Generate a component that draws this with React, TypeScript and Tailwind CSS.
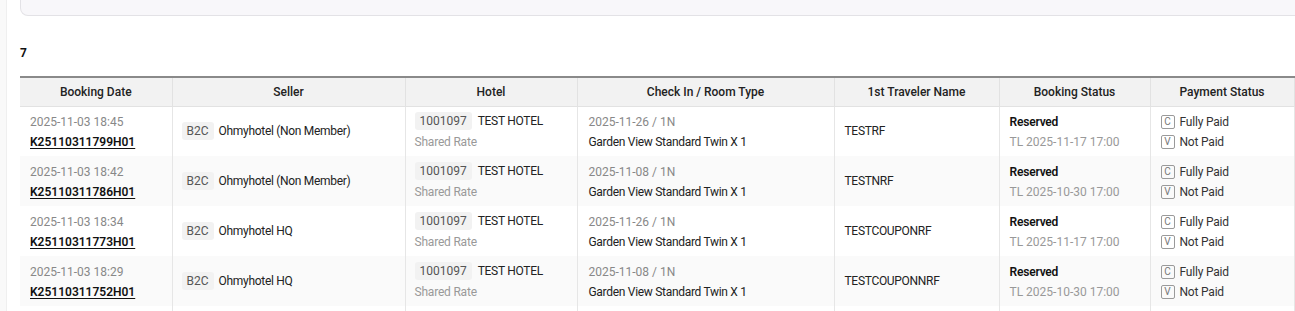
import React from "react";

type Row = {
  date: string;
  no: string;
  seller: string;
  checkIn: string;
  tl: string;
  traveler: string;
};

const rows: Row[] = [
  { date: "2025-11-03 18:45", no: "K25110311799H01", seller: "Ohmyhotel (Non Member)", checkIn: "2025-11-26 / 1N", tl: "TL 2025-11-17 17:00", traveler: "TESTRF" },
  { date: "2025-11-03 18:42", no: "K25110311786H01", seller: "Ohmyhotel (Non Member)", checkIn: "2025-11-08 / 1N", tl: "TL 2025-10-30 17:00", traveler: "TESTNRF" },
  { date: "2025-11-03 18:34", no: "K25110311773H01", seller: "Ohmyhotel HQ", checkIn: "2025-11-26 / 1N", tl: "TL 2025-11-17 17:00", traveler: "TESTCOUPONRF" },
  { date: "2025-11-03 18:29", no: "K25110311752H01", seller: "Ohmyhotel HQ", checkIn: "2025-11-08 / 1N", tl: "TL 2025-10-30 17:00", traveler: "TESTCOUPONNRF" },
];

const headers = [
  { label: "Booking Date", w: "w-[152px]" },
  { label: "Seller", w: "w-[233px]" },
  { label: "Hotel", w: "w-[172px]" },
  { label: "Check In / Room Type", w: "w-[257px]" },
  { label: "1st Traveler Name", w: "w-[165px]" },
  { label: "Booking Status", w: "w-[151px]" },
  { label: "Payment Status", w: "w-[144px]" },
  { label: "", w: "w-[120px]" },
];

const Chip = ({ children }: { children: React.ReactNode }) => (
  <span className="inline-flex items-center h-[18px] px-[5px] rounded-[3px] bg-[#f2f2f2] text-[#555]">
    {children}
  </span>
);

const PayBox = ({ letter }: { letter: string }) => (
  <span className="inline-flex items-center justify-center w-[14px] h-[14px] border border-[#9a9a9a] rounded-[2px] text-[10px] text-[#777] leading-none">
    {letter}
  </span>
);

const App = () => {
  return (
    <div
      className="w-[1295px] h-[311px] overflow-hidden bg-white flex text-[12px] text-[#222]"
      style={{ fontFamily: "Roboto, 'Liberation Sans', sans-serif" }}
    >
      {/* side strip */}
      <div className="w-[7px] shrink-0 bg-[#f9f9f9] border-r border-[#efefef]" />
      <div className="flex-1 pl-[13px] min-w-0">
        {/* search panel bottom edge */}
        <div className="h-[16px] -mr-[40px] bg-[#f8f7fa] border-x border-b border-[#e3e2e6] rounded-b-lg" />
        <div className="pt-[28px] h-[60px] font-bold text-[12px] leading-[18px] text-[#111]">7</div>
        <table className="table-fixed border-collapse w-[1394px] border-t-2 border-[#8a8a8a]">
          <thead>
            <tr className="bg-[#f2f2f2] h-[29px]">
              {headers.map((h, i) => (
                <th
                  key={i}
                  className={`${h.w} font-medium text-[12px] text-[#222] border-b border-r border-[#e2e2e2] text-center`}
                >
                  {h.label}
                </th>
              ))}
            </tr>
          </thead>
          <tbody>
            {rows.map((r, i) => (
              <tr key={i} className={`h-[50px] ${i % 2 === 1 ? "bg-[#fafafa]" : "bg-white"}`}>
                <td className="px-[10px] pt-[1px] border-r border-[#e6e6e6] leading-[20px]">
                  <div className="text-[#888]">{r.date}</div>
                  <div className="font-semibold underline underline-offset-2 text-[#111]">{r.no}</div>
                </td>
                <td className="px-[9px] border-r border-[#e6e6e6]">
                  <div className="flex items-center gap-[5px]">
                    <Chip>B2C</Chip>
                    <span className="tracking-[-0.3px]">{r.seller}</span>
                  </div>
                </td>
                <td className="px-[9px] pt-[2px] border-r border-[#e6e6e6]">
                  <div className="flex items-center gap-[6px] h-[20px]">
                    <Chip>1001097</Chip>
                    <span className="tracking-[-0.3px]">TEST HOTEL</span>
                  </div>
                  <div className="text-[#999] leading-[22px] tracking-[-0.2px]">Shared Rate</div>
                </td>
                <td className="px-[11px] pt-[1px] border-r border-[#e6e6e6] leading-[20px]">
                  <div className="text-[#888]">{r.checkIn}</div>
                  <div className="tracking-[-0.3px]">Garden View Standard Twin X 1</div>
                </td>
                <td className="px-[10px] border-r border-[#e6e6e6] tracking-[-0.3px]">{r.traveler}</td>
                <td className="px-[10px] pt-[1px] border-r border-[#e6e6e6] leading-[20px]">
                  <div className="font-semibold text-[#111] tracking-[-0.2px]">Reserved</div>
                  <div className="text-[#999]">{r.tl}</div>
                </td>
                <td className="px-[10px] pt-[1px] border-r border-[#e6e6e6] leading-[20px]">
                  <div className="flex items-center gap-[5px]">
                    <PayBox letter="C" />
                    <span className="text-[#333] tracking-[-0.2px]">Fully Paid</span>
                  </div>
                  <div className="flex items-center gap-[5px]">
                    <PayBox letter="V" />
                    <span className="text-[#333] tracking-[-0.2px]">Not Paid</span>
                  </div>
                </td>
                <td className="border-r border-[#e6e6e6]" />
              </tr>
            ))}
            <tr className="h-[50px]">
              {headers.map((_, i) => (
                <td key={i} className="border-r border-[#e6e6e6]" />
              ))}
            </tr>
          </tbody>
        </table>
      </div>
    </div>
  );
};

export default App;
